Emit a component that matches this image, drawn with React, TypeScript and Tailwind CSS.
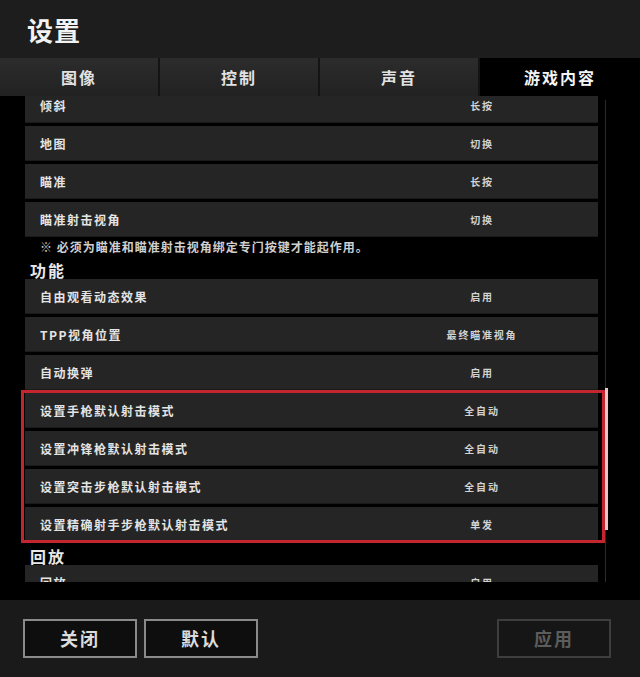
const FONT = {
  fontFamily: '"Noto Sans CJK SC", "Noto Sans", "Liberation Sans", sans-serif',
};

const TABS = ["图像", "控制", "声音", "游戏内容"];

type Row = { label: string; value: string };

const KEY_ROWS: Row[] = [
  { label: "倾斜", value: "长按" },
  { label: "地图", value: "切换" },
  { label: "瞄准", value: "长按" },
  { label: "瞄准射击视角", value: "切换" },
];

const FUNC_ROWS: Row[] = [
  { label: "自由观看动态效果", value: "启用" },
  { label: "TPP视角位置", value: "最终瞄准视角" },
  { label: "自动换弹", value: "启用" },
];

const FIRE_ROWS: Row[] = [
  { label: "设置手枪默认射击模式", value: "全自动" },
  { label: "设置冲锋枪默认射击模式", value: "全自动" },
  { label: "设置突击步枪默认射击模式", value: "全自动" },
  { label: "设置精确射手步枪默认射击模式", value: "单发" },
];

function SettingRow({ label, value }: Row) {
  return (
    <div className="flex h-[35px] shrink-0 items-center bg-[#252525] shadow-[inset_0_-1px_0_#1a1a1a]">
      <span className="flex-1 pl-[15px] text-[12px] font-bold tracking-[1.5px] text-[#e4e4e4]">
        {label}
      </span>
      <span className="mr-[36px] w-[160px] text-center text-[10px] font-bold tracking-[1.8px] text-[#d2d2d2]">
        {value}
      </span>
    </div>
  );
}

function SectionTitle({ children }: { children: string }) {
  return (
    <div className="flex h-[23px] items-end pb-[1px] pl-[5px] text-[16px] font-bold leading-none tracking-[2px] text-[#e8e8e8]">
      {children}
    </div>
  );
}

export default function App() {
  return (
    <div
      className="flex h-[677px] w-[640px] flex-col overflow-hidden bg-black"
      style={FONT}
    >
      <header className="flex h-[58px] shrink-0 items-center bg-[#1d1d1d] pl-[27px]">
        <h1 className="text-[26px] font-bold tracking-[1px] text-[#f2f2f2]">
          设置
        </h1>
      </header>

      <nav className="grid h-[38px] shrink-0 grid-cols-4 bg-[#1d1d1d]">
        {TABS.map((tab, i) => {
          const active = i === TABS.length - 1;
          return (
            <div
              key={tab}
              className={
                active
                  ? "flex items-center justify-center bg-black text-[16px] font-bold tracking-[2px] text-[#f5f5f5]"
                  : "flex items-center justify-center border-r-2 border-[#141414] bg-gradient-to-b from-[#2c2c2c] to-[#222222] text-[16px] font-bold tracking-[2px] text-[#e2e2e2]"
              }
            >
              {tab}
            </div>
          );
        })}
      </nav>

      <main className="relative flex h-[504px] shrink-0 flex-col bg-black pb-[18px]">
        <div className="relative flex-1 overflow-hidden">
          <div className="ml-[25px] mt-[-8px] flex w-[573px] flex-col">
            <div className="flex flex-col gap-[3px]">
              {KEY_ROWS.map((r) => (
                <SettingRow key={r.label} {...r} />
              ))}
            </div>
            <p className="flex h-[19px] items-center pl-[15px] text-[12px] font-bold tracking-[1px] text-[#cfcfcf]">
              ※ 必须为瞄准和瞄准射击视角绑定专门按键才能起作用。
            </p>
            <SectionTitle>功能</SectionTitle>
            <div className="flex flex-col gap-[3px]">
              {FUNC_ROWS.map((r) => (
                <SettingRow key={r.label} {...r} />
              ))}
              <div className="relative flex flex-col gap-[3px]">
                {FIRE_ROWS.map((r) => (
                  <SettingRow key={r.label} {...r} />
                ))}
                <div className="pointer-events-none absolute bottom-[-1px] left-[-4px] right-[-7px] top-[-3px] border-[3px] border-[#c3262e]" />
              </div>
            </div>
            <SectionTitle>回放</SectionTitle>
            <div className="flex flex-col gap-[3px]">
              <SettingRow label="回放" value="启用" />
            </div>
          </div>
        </div>

        {/* scrollbar */}
        <div className="absolute left-[605px] top-[4px] h-[482px] w-[1px] bg-[#2a2a2a]" />
        <div className="absolute left-[605px] top-[292px] h-[142px] w-[3px] bg-[#ecc8c8]" />
      </main>

      <footer className="flex flex-1 items-center bg-[#1a1a1a] pl-[23px] pr-[29px]">
        <button className="h-[39px] w-[114px] border-2 border-[#8a8a8a] bg-[#0e0e0e] text-[18px] font-bold tracking-[2px] text-[#dcdcdc]">
          关闭
        </button>
        <button className="ml-[7px] h-[39px] w-[114px] border-2 border-[#8a8a8a] bg-[#0e0e0e] text-[18px] font-bold tracking-[2px] text-[#dcdcdc]">
          默认
        </button>
        <button className="ml-auto h-[39px] w-[114px] border-2 border-[#3e3e3e] bg-[#161616] text-[18px] font-bold tracking-[2px] text-[#5c5c5c]">
          应用
        </button>
      </footer>
    </div>
  );
}
